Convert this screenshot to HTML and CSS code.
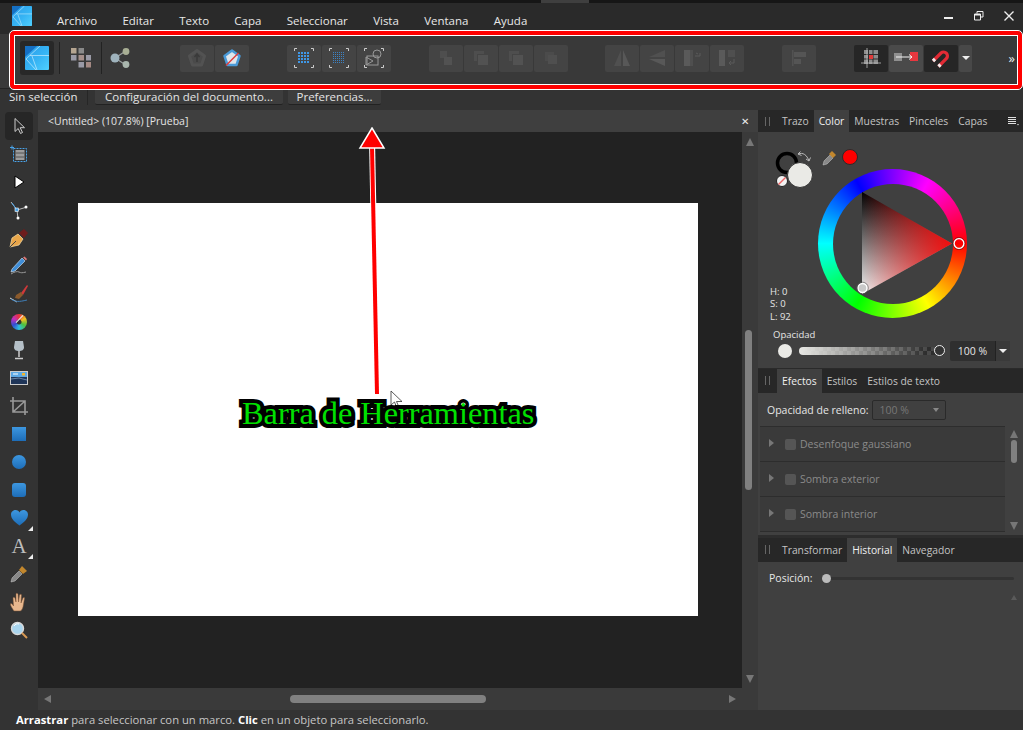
FILE: index.html
```html
<!DOCTYPE html>
<html lang="es">
<head>
<meta charset="utf-8">
<title>Affinity Designer</title>
<link rel="stylesheet" href="styles.css">
</head>
<body>
<svg class="defs" width="0" height="0">
  <defs>
    <linearGradient id="logoG" x1="0" y1="0" x2="1" y2="1"><stop offset="0" stop-color="#2a9be8"/><stop offset=".55" stop-color="#36b4f4"/><stop offset="1" stop-color="#4fd0ff"/></linearGradient>
    <linearGradient id="blueG" x1="0" y1="0" x2="0" y2="1"><stop offset="0" stop-color="#3d97e0"/><stop offset="1" stop-color="#1d6db8"/></linearGradient>
    <linearGradient id="triV" x1="0" y1="0" x2="0" y2="1"><stop offset="0" stop-color="#000"/><stop offset="1" stop-color="#f4f4f4"/></linearGradient>
    <linearGradient id="triH" x1="0" y1="0" x2="1" y2="0"><stop offset="0" stop-color="#f00" stop-opacity="0"/><stop offset="1" stop-color="#f00"/></linearGradient>
    <symbol id="logo" viewBox="0 0 24 24">
      <rect width="24" height="24" rx="1" fill="url(#logoG)"/>
      <path d="M0 0H12L0 11Z" fill="#1570c4"/>
      <path d="M15 0L1 13 11 24M5 9.500H24M7 10L12 24" stroke="#d5f2ff" stroke-width=".9" fill="none" opacity=".7"/>
    </symbol>
  </defs>
</svg>

<div class="app">
  <div class="topstrip"><span class="strip-tab"></span></div>

  <header class="titlebar">
    <svg class="title-logo"><use href="#logo"/></svg>
    <nav class="menu">
      <span>Archivo</span><span>Editar</span><span>Texto</span><span>Capa</span><span>Seleccionar</span><span>Vista</span><span>Ventana</span><span>Ayuda</span>
    </nav>
    <div class="winctl">
      <svg width="10" height="10" viewBox="0 0 10 10"><rect x="0" y="6" width="9" height="2" fill="#eee"/></svg>
      <svg width="10" height="10" viewBox="0 0 10 10"><path d="M3 2.500V.5H9V6H7M.5 3H6.500V9H.5Z" fill="none" stroke="#eee"/><rect x="1" y="3" width="5" height="1.500" fill="#eee"/></svg>
      <svg width="10" height="10" viewBox="0 0 10 10"><path d="M.5.5L9.500 9.500M9.500.5L.5 9.500" stroke="#eee" stroke-width="1.400"/></svg>
    </div>
  </header>

  <div class="toolbar">
    <div class="persona"><svg width="24" height="24"><use href="#logo"/></svg></div>
    <i class="vsep"></i>
    <svg class="plain studio" width="20" height="20" viewBox="0 0 20 20">
      <rect x="0" y="0" width="5.500" height="5.500" fill="#b5a591"/><rect x="7.500" y="0" width="5.500" height="5.500" fill="#8a8a8a"/>
      <rect x="0" y="7" width="5.500" height="5.500" fill="#9a9aa6"/><rect x="7.500" y="7" width="5.500" height="5.500" fill="#a58f8a"/><rect x="15" y="7" width="5" height="5.500" fill="#9a9aa6"/>
      <rect x="7.500" y="14" width="5.500" height="5.500" fill="#9a9aa6"/><rect x="15" y="14" width="5" height="5.500" fill="#a58a84"/>
    </svg>
    <i class="vsep"></i>
    <svg class="plain share" width="20" height="20" viewBox="0 0 20 20">
      <path d="M5 10L15 3.500M5 10L15 16.500" stroke="#9a9f9f" stroke-width="1.400"/>
      <circle cx="5" cy="10" r="4.500" fill="#9fb3bd"/><circle cx="16" cy="3.500" r="3.400" fill="#a8ae94"/><circle cx="16" cy="16.500" r="3.400" fill="#a9b6ad"/>
    </svg>

    <div class="group g1">
      <button class="tb"><svg width="22" height="22" viewBox="0 0 22 22"><path d="M11 3.500L18.500 9 15.500 18H6.500L3.500 9Z" fill="#4a4a4a" stroke="#525252" stroke-width="3" stroke-linejoin="round"/><path d="M11 7v8M8.500 10L11 7l2.500 3" stroke="#3a3a3a" stroke-width="1.500" fill="none"/></svg></button>
      <button class="tb"><svg width="22" height="22" viewBox="0 0 22 22"><path d="M11 3.500L18.500 9 15.500 18H6.500L3.500 9Z" fill="#dfe6ec" stroke="#4a9ad8" stroke-width="2.400" stroke-linejoin="round"/><path d="M5 18.500L17.500 6" stroke="#e03a3a" stroke-width="1.500"/></svg></button>
    </div>

    <div class="group g2">
      <button class="tb"><svg width="20" height="20" viewBox="0 0 20 20"><path class="crn" d="M.5 3V.5H3M17 .5h2.500V3M19.500 17v2.500H17M3 19.500H.5V17"/><path d="M4 5h12M4 8h12M4 11h12M4 14h12" stroke="#3f97e6" stroke-width="2" stroke-dasharray="2 1"/></svg></button>
      <button class="tb"><svg width="20" height="20" viewBox="0 0 20 20"><path class="crn" d="M.5 3V.5H3M17 .5h2.500V3M19.500 17v2.500H17M3 19.500H.5V17"/><path d="M4 4.500h12M4 6.500h12M4 8.500h12M4 10.500h12M4 12.500h12M4 14.500h12" stroke="#3c82c4" stroke-dasharray="1 1"/></svg></button>
      <button class="tb"><svg width="20" height="20" viewBox="0 0 20 20"><path class="crn" d="M.5 3V.5H3M17 .5h2.500V3M19.500 17v2.500H17M3 19.500H.5V17"/><rect x="3" y="8" width="11" height="9" fill="none" stroke="#999"/><circle cx="13" cy="6" r="4" fill="none" stroke="#999"/><path d="M2 9l7 4-7 4z" fill="none" stroke="#999"/></svg></button>
    </div>

    <div class="group g3">
      <button class="tb"><svg width="20" height="20" viewBox="0 0 20 20"><rect x="4" y="3" width="7" height="7" fill="#4e4e4e"/><rect x="8" y="9" width="8" height="8" fill="#525252"/></svg></button>
      <button class="tb"><svg width="20" height="20" viewBox="0 0 20 20"><path d="M3 3h10v3H6v7H3z" fill="#4e4e4e"/><rect x="7" y="7" width="10" height="10" fill="#525252"/></svg></button>
      <button class="tb"><svg width="20" height="20" viewBox="0 0 20 20"><path d="M3 3h10v3H6v7H3z" fill="#4e4e4e"/><rect x="7" y="7" width="10" height="10" fill="#525252"/></svg></button>
      <button class="tb"><svg width="20" height="20" viewBox="0 0 20 20"><path d="M4 4h9v3H7v6H4z" fill="#4b4b4b"/><rect x="7" y="7" width="9" height="9" fill="#4f4f4f"/></svg></button>
    </div>

    <div class="group g4">
      <button class="tb"><svg width="22" height="22" viewBox="0 0 22 22"><path d="M10 3v16H3z" fill="#505050"/><path d="M12 3v16h7z" fill="#585858"/></svg></button>
      <button class="tb"><svg width="22" height="22" viewBox="0 0 22 22"><path d="M19 3v7H3z" fill="#505050"/><path d="M19 19v-7H3z" fill="#585858"/></svg></button>
      <button class="tb"><svg width="22" height="22" viewBox="0 0 22 22"><rect x="3" y="3" width="6" height="16" fill="#5a5a5a"/><rect x="9" y="3" width="3" height="16" fill="#4f4f4f"/><path d="M14 9h5v-3M17 7l-2-1" stroke="#5a5a5a" fill="none"/></svg></button>
      <button class="tb"><svg width="22" height="22" viewBox="0 0 22 22"><rect x="3" y="3" width="6" height="16" fill="#5a5a5a"/><rect x="12" y="3" width="7" height="7" fill="#4f4f4f"/><path d="M18 12v4h-5M15 14l-2 2 2 2" stroke="#5a5a5a" fill="none"/></svg></button>
    </div>

    <div class="group g5">
      <button class="tb"><svg width="22" height="22" viewBox="0 0 22 22"><rect x="4" y="3" width="1.500" height="16" fill="#525252"/><rect x="6" y="5" width="12" height="5" fill="#555"/><rect x="6" y="12" width="7" height="5" fill="#555"/></svg></button>
    </div>

    <div class="group g6">
      <button class="tb dark"><svg width="20" height="20" viewBox="0 0 20 20"><rect x="3" y="2" width="14" height="14" fill="#8c8c8c"/><path d="M3 6.500h14M3 11h14M7.500 2v14M12 2v14" stroke="#2b2b2b"/><rect x="8" y="7" width="4" height="4" fill="#e03a3a"/><path d="M0 15h20M6 0v20" stroke="#bbb" stroke-width=".8"/></svg></button>
      <button class="tb lit"><svg width="24" height="14" viewBox="0 0 24 14"><rect x="0" y="2" width="8" height="8" fill="#8f8f8f"/><rect x="16" y="1" width="8" height="9" fill="#e8373f"/><path d="M2 6h16M15 3.500L18 6l-3 2.500" stroke="#f2f2f2" fill="none"/></svg></button>
      <button class="tb dark"><svg width="20" height="20" viewBox="0 0 20 20"><path d="M2 13L10 5A3.900 3.900 0 0 1 15.500 10.500L7.500 18.500" fill="none" stroke="#e22b35" stroke-width="3.200"/><path d="M2 13L4 11M7.500 18.500L9.500 16.500" stroke="#eee" stroke-width="3.200"/></svg></button>
      <button class="tb drop"><i class="caret"></i></button>
    </div>

    <span class="more">»</span>
  </div>

  <div class="contextbar">
    <span class="ctx-label">Sin selección</span>
    <i class="ctx-sep"></i>
    <button class="ctx-btn w1">Configuración del documento...</button>
    <button class="ctx-btn w2">Preferencias...</button>
  </div>

  <main class="workspace">
    <aside class="tools">
      <div class="tool sel"><svg width="18" height="18" viewBox="0 0 18 18"><path d="M5 1.500v13l3.200-3 2.300 5 2-1-2.300-4.800h4.300z" fill="#2b2b2b" stroke="#ccc"/></svg></div>
      <div class="tool"><svg width="18" height="18" viewBox="0 0 18 18"><path d="M0 2.500h4M2 .5v4" stroke="#4aa3e8"/><rect x="3.500" y="3.500" width="13" height="13" fill="none" stroke="#4aa3e8" stroke-dasharray="2 1"/><rect x="5.500" y="5" width="9" height="10" fill="#9d9d9d"/><path d="M5.500 8h9M5.500 12h9" stroke="#555"/></svg></div>
      <div class="tool"><svg width="12" height="14" viewBox="0 0 12 14"><path d="M2 1v12l9-6z" fill="#fff" stroke="#000"/></svg></div>
      <div class="tool"><svg width="20" height="20" viewBox="0 0 20 20"><path d="M2 2l6 8 10-3M8 10l1 9" fill="none" stroke="#bbb"/><path d="M8 10L3 3" stroke="#4aa3e8"/><rect x="6" y="8" width="3.500" height="3.500" fill="#4aa3e8" stroke="#fff" stroke-width=".6"/><circle cx="17" cy="7" r="1.500" fill="#fff"/><circle cx="9" cy="18" r="1.500" fill="#fff"/></svg></div>
      <div class="tool"><svg width="20" height="20" viewBox="0 0 20 20"><path d="M1 19l2-9 6-4 5 5-4 6z" fill="#e9a64a" stroke="#fbe0a8" stroke-width=".7"/><path d="M1 19l6-6" stroke="#444"/><path d="M10 5l5-4 4 4-4 5z" fill="#6d1d1d"/></svg></div>
      <div class="tool"><svg width="20" height="20" viewBox="0 0 20 20"><path d="M3 13L13 2l3 3L6 15l-4 1z" fill="#3f8ed8" stroke="#d8e8f5" stroke-width=".6"/><path d="M14 1.500l3 3 1-1.500-2.500-2.500z" fill="#e07a7a"/><path d="M2 18c3-2 6-3 8-2s3 1 7 0" fill="none" stroke="#999"/></svg></div>
      <div class="tool"><svg width="20" height="20" viewBox="0 0 20 20"><path d="M12 9L18 1l1 1-5 9z" fill="#d0393a"/><path d="M7 11l5-3 2 3-4 4-4-1z" fill="#8a5a2c"/><path d="M1 14l7 4" stroke="#ddd"/><path d="M2 15c4 3 8 3 16 1" fill="none" stroke="#3f7fb8"/></svg></div>
      <div class="tool"><span class="wheel-ico"></span></div>
      <div class="tool"><svg width="14" height="20" viewBox="0 0 14 20"><path d="M3 1h8l1 6c0 3-2 4-5 4S2 10 2 7z" fill="#b5c0c8"/><path d="M7 11v6M3 18.500h8" stroke="#ccc" stroke-width="1.500"/></svg></div>
      <div class="tool"><svg width="18" height="14" viewBox="0 0 18 14"><rect x=".5" y=".5" width="17" height="13" fill="#1f3558" stroke="#ccc"/><rect x="1" y="1" width="16" height="5" fill="#5ea9e4"/><rect x="12" y="2" width="3" height="2.500" fill="#f3b52c"/><path d="M3 3h5" stroke="#fff"/><path d="M1 8l8-1 8 2" stroke="#6a88a8" fill="none"/></svg></div>
      <div class="tool"><svg width="18" height="18" viewBox="0 0 18 18"><path d="M3 0v15h15M0 4h15v14M3 15L15 4" fill="none" stroke="#999" stroke-width="1.600"/></svg></div>
      <div class="tool"><span class="shape sq"></span></div>
      <div class="tool"><span class="shape ci"></span></div>
      <div class="tool"><span class="shape rr"></span></div>
      <div class="tool tri"><svg width="17" height="16" viewBox="0 0 17 16"><path d="M8.500 15.500C4 12 0 9 0 4.500 0 1.500 2.500 0 4.500 0c2 0 3.500 1 4 2.500C9 1 10.500 0 12.500 0 14.500 0 17 1.500 17 4.500 17 9 13 12 8.500 15.500z" fill="url(#blueG)"/></svg></div>
      <div class="tool tri"><span class="big-a">A</span></div>
      <div class="tool"><svg width="18" height="18" viewBox="0 0 18 18"><path d="M1 17l1-4 7-7 3 3-7 7z" fill="#888" stroke="#ccc" stroke-width=".5"/><path d="M9 5l3-4 5 5-4 3z" fill="#c2872d"/></svg></div>
      <div class="tool"><svg width="20" height="20" viewBox="0 0 18 20"><path d="M4 19c-2-3-4-6-3.500-7s2 0 3 2L3 6c0-1 1.500-1 2 0l1 4 0-8c0-1 1.500-1 2 0l.5 8 1-7c.5-1 2-1 2 0l-.5 8 2-5c.5-1 2-.5 1.500.5L13 15c-1 3-2 4-3 4z" fill="#e8b78e" stroke="#7a5032" stroke-width=".5"/></svg></div>
      <div class="tool"><svg width="18" height="18" viewBox="0 0 18 18"><circle cx="7.500" cy="7.500" r="6" fill="#a9d5ee" stroke="#d9d9d9" stroke-width="1.400"/><path d="M4 5c1-2 3-2.500 5-2" stroke="#fff" fill="none"/><path d="M12 12l5 5" stroke="#d89a54" stroke-width="2"/></svg></div>
    </aside>

    <section class="document">
      <div class="doc-tab"><span>&lt;Untitled&gt; (107.8%) [Prueba]</span><b class="doc-x">✕</b></div>
      <div class="doc-body">
        <div class="canvas"><div class="page"></div></div>
        <div class="vbar"><i class="ar up"></i><i class="vthumb"></i><i class="ar down"></i></div>
      </div>
      <div class="hbar"><i class="ar left"></i><i class="hthumb"></i><i class="ar right"></i></div>
    </section>

    <aside class="panels">
      <div class="tabs">
        <i class="grip"></i><span>Trazo</span><span class="on">Color</span><span>Muestras</span><span>Pinceles</span><span>Capas</span>
        <svg class="panel-menu" width="11" height="9" viewBox="0 0 11 9"><path d="M0 .5h8M0 2.500h8M0 4.500h8M0 6.500h8" stroke="#ddd"/><path d="M9 7h2L10 8.500z" fill="#ddd"/></svg>
      </div>
      <div class="colorbody">
        <div class="color-main">
          <div class="color-left">
            <svg class="swatches" width="90" height="40" viewBox="0 0 90 40">
              <circle cx="16" cy="13" r="9.500" fill="none" stroke="#000" stroke-width="3.500"/>
              <circle cx="29" cy="25" r="12.500" fill="#eaeae6" stroke="#333"/>
              <circle cx="11" cy="31" r="5.500" fill="#f2f2f2" stroke="#222"/><path d="M7.500 34.500L14.500 27.500" stroke="#e66" stroke-width="1.500"/>
              <path d="M27 4c5-2 9 1 11 7M27 4l2.500-2.500M27 4l3.500 1.500M38 11l-3-2M38 11l1.500-3.500" fill="none" stroke="#bbb"/>
              <path d="M52 15l1-4 6-6 3 3-6 6z" fill="#888" stroke="#ccc" stroke-width=".5"/><path d="M58 4l3-3 4 4-3 3z" fill="#c2872d"/>
              <circle cx="79" cy="7" r="7.500" fill="#f00" stroke="#2b2b2b"/>
            </svg>
            <div class="hsl"><div>H: 0</div><div>S: 0</div><div>L: 92</div></div>
          </div>
          <div class="wheel">
            <svg class="wheel-over" width="149" height="149" viewBox="0 0 149 149">
              <path d="M44 23L134 74.500 44 125z" fill="url(#triV)"/>
              <path d="M44 23L134 74.500 44 125z" fill="url(#triH)" opacity=".9"/>
              <circle cx="141" cy="74.500" r="5" fill="none" stroke="#fff" stroke-width="1.600"/>
              <circle cx="141" cy="74.500" r="6" fill="none" stroke="#300" stroke-width=".5"/>
              <circle cx="44.500" cy="119" r="4.500" fill="#c9c9c9" stroke="#fff" stroke-width="1.400"/>
              <circle cx="44.500" cy="119" r="5.800" fill="none" stroke="#555" stroke-width=".6"/>
            </svg>
          </div>
        </div>
        <div class="op-label">Opacidad</div>
        <div class="op-row">
          <i class="op-swatch"></i>
          <div class="op-slider"><i class="op-thumb"></i></div>
          <div class="op-box"><span>100 %</span><i class="op-drop"><i class="caret"></i></i></div>
        </div>
      </div>

      <div class="tabs t2">
        <i class="grip"></i><span class="on">Efectos</span><span>Estilos</span><span>Estilos de texto</span>
      </div>
      <div class="fxbody">
        <div class="fill-row"><span>Opacidad de relleno:</span><div class="fill-box"><span>100 %</span><i class="caret dim"></i></div></div>
        <div class="fx-wrap">
          <div class="fx-list">
            <div class="fx"><i class="tw"></i><i class="chk"></i><span>Desenfoque gaussiano</span></div>
            <div class="fx"><i class="tw"></i><i class="chk"></i><span>Sombra exterior</span></div>
            <div class="fx"><i class="tw"></i><i class="chk"></i><span>Sombra interior</span></div>
          </div>
          <div class="fx-scroll"><i class="ar up"></i><i class="fx-thumb"></i><i class="ar down"></i></div>
        </div>
      </div>

      <div class="tabs t3">
        <i class="grip"></i><span>Transformar</span><span class="on">Historial</span><span>Navegador</span>
      </div>
      <div class="histbody">
        <span>Posición:</span>
        <div class="hist-slider"><i class="hist-thumb"></i></div>
        <i class="hist-up"></i>
      </div>
    </aside>
  </main>

  <footer class="status"><b>Arrastrar</b> para seleccionar con un marco. <b>Clic</b> en un objeto para seleccionarlo.</footer>

  <div class="frame"></div>
  <svg class="arrow" width="40" height="285" viewBox="0 0 40 285">
    <path d="M20 12L25 268" stroke="#fff" stroke-width="6"/>
    <path d="M20 20L25 267" stroke="#f00" stroke-width="4"/>
    <path d="M20 1L32 21H8z" fill="#f00" stroke="#fff" stroke-width="1.500"/>
  </svg>
  <svg class="cursor" width="14" height="20" viewBox="0 0 14 20"><path d="M1 1v14l3.500-3 2 5 2-1-2-4.500H12z" fill="#fff" stroke="#333" stroke-width=".8"/></svg>
  <div class="label">Barra de Herramientas</div>
</div>
</body>
</html>
```

FILE: styles.css
```css
* { box-sizing: border-box; }
html, body { margin: 0; padding: 0; background: #2b2b2b; }
body { font-family: "Open Sans", "Noto Sans", sans-serif; font-size: 11px; color: #e6e6e6; overflow: hidden; }
button { font: inherit; color: inherit; border: 0; padding: 0; margin: 0; }
i { display: block; font-style: normal; }
.defs { position: absolute; }

.app { position: relative; width: 1023px; height: 730px; display: flex; flex-direction: column; overflow: hidden; background: #2b2b2b; }

.topstrip { height: 3px; background: #161616; padding-left: 541px; flex: none; }
.strip-tab { display: block; width: 48px; height: 3px; background: #3f3f3f; }

.titlebar { height: 31px; flex: none; display: flex; align-items: center; background: #2a2a2a; padding-left: 12px; }
.title-logo { width: 20px; height: 20px; flex: none; margin-top: -5px; }
.menu { display: flex; gap: 25.3px; margin-left: 25px; font-size: 11.5px; color: #e8e8e8; padding-top: 3px; }
.winctl { margin-left: auto; display: flex; gap: 20px; padding-right: 9px; margin-top: -5px; }

.toolbar { height: 55px; flex: none; display: flex; align-items: center; background: #393939; padding: 0 0 6px 20px; border-bottom: 1px solid #242424; }
.persona { width: 34px; height: 34px; background: #282828; border-radius: 3px; display: flex; align-items: center; justify-content: center; }
.vsep { width: 1px; height: 32px; background: #222; margin-left: 5px; }
.plain { flex: none; }
.studio { margin-left: 11px; margin-right: 5px; }
.share { margin-left: 8px; }
.group { display: flex; gap: 1px; }
.g1 { margin-left: 50px; }
.g2 { margin-left: 38px; }
.g3 { margin-left: 38px; }
.g4 { margin-left: 37px; }
.g5 { margin-left: 38px; }
.g6 { margin-left: 38px; }
.tb { width: 34px; height: 27px; background: #444; border-radius: 2px; display: flex; align-items: center; justify-content: center; }
.tb.dark { background: #262626; }
.tb.lit { background: #4a4a4a; }
.tb.drop { width: 13px; background: #484848; }
.crn { fill: none; stroke: #ccc; }
.caret { width: 0; height: 0; border-left: 4px solid transparent; border-right: 4px solid transparent; border-top: 4px solid #eee; }
.caret.dim { border-top-color: #888; border-left-width: 3.500px; border-right-width: 3.500px; }
.more { margin-left: auto; margin-right: 8px; color: #eee; font-size: 13px; line-height: 1; }

.contextbar { height: 21px; flex: none; display: flex; align-items: flex-start; background: #333; }
.ctx-label { padding: 0 0 0 9px; width: 87px; line-height: 15px; font-size: 11.5px; }
.ctx-sep { width: 1px; height: 16px; background: #262626; }
.ctx-btn { height: 16px; line-height: 15px; background: #3d3d3d; border-bottom: 1px solid #222; border-radius: 0 0 2px 2px; font-size: 11.5px; color: #e4e4e4; }
.w1 { width: 188px; margin-left: 7px; }
.w2 { width: 93px; margin-left: 5px; }

.workspace { height: 600px; flex: none; display: flex; background: #333; }
.tools { width: 38px; flex: none; background: #333; padding-top: 2px; display: flex; flex-direction: column; align-items: center; }
.tool { width: 28px; height: 28px; flex: none; display: flex; align-items: center; justify-content: center; position: relative; }
.tool.sel { background: #262626; border-radius: 4px; }
.tool.tri::after { content: ""; position: absolute; right: 0; bottom: 1px; border-left: 5px solid transparent; border-bottom: 5px solid #eee; }
.wheel-ico { width: 16px; height: 16px; border-radius: 50%; background: radial-gradient(#333 0 2px, transparent 3px), conic-gradient(#e8333a, #f0c020, #4cc040, #30c0e0, #3050d0, #c030c0, #e8333a); position: relative; }
.wheel-ico::after { content: ""; position: absolute; left: 8px; top: 0; width: 1px; height: 10px; background: #eee; transform: rotate(45deg); }
.shape { width: 14px; height: 14px; background: linear-gradient(#3d97e0, #1d6db8); display: block; }
.shape.ci { border-radius: 50%; }
.shape.rr { border-radius: 3px; }
.big-a { font-family: "Liberation Serif", serif; font-size: 21px; color: #bdbdbd; line-height: 1; }

.document { width: 720px; flex: none; display: flex; flex-direction: column; }
.doc-tab { height: 22px; flex: none; display: flex; align-items: center; justify-content: space-between; background: #3f3f3f; padding: 0 9px 0 10px; font-size: 10.5px; color: #e4e4e4; }
.doc-x { font-weight: 400; font-size: 10px; color: #eee; }
.doc-body { display: flex; height: 556px; flex: none; }
.canvas { width: 704px; flex: none; background: #222; padding: 71px 0 0 40px; }
.page { width: 620px; height: 413px; background: #fff; }
.vbar { width: 16px; flex: none; background: #3a3a3a; position: relative; display: flex; flex-direction: column; align-items: center; }
.vthumb { position: absolute; top: 198px; left: 3px; width: 7px; height: 160px; background: #808080; border-radius: 4px; }
.vbar .up { margin-top: 6px; }
.vbar .down { margin-top: auto; margin-bottom: 5px; }
.ar { width: 0; height: 0; }
.ar.up { border-left: 4px solid transparent; border-right: 4px solid transparent; border-bottom: 8px solid #777; }
.ar.down { border-left: 4px solid transparent; border-right: 4px solid transparent; border-top: 8px solid #777; }
.ar.left { border-top: 4px solid transparent; border-bottom: 4px solid transparent; border-right: 7px solid #777; }
.ar.right { border-top: 4px solid transparent; border-bottom: 4px solid transparent; border-left: 7px solid #777; }
.hbar { height: 22px; flex: none; display: flex; align-items: center; background: #3a3a3a; padding: 0 22px 0 6px; }
.hthumb { width: 196px; height: 8px; background: #808080; border-radius: 4px; margin-left: 239px; }
.hbar .right { margin-left: auto; }

.panels { width: 265px; flex: none; display: flex; flex-direction: column; background: #404040; }
.tabs { height: 22px; flex: none; display: flex; align-items: stretch; background: #272727; padding-left: 4px; position: relative; font-size: 10.3px; color: #c4c4c4; }
.tabs span { padding: 0 5px; line-height: 22px; }
.tabs .on { background: #404040; color: #f0f0f0; }
.grip { width: 5px; height: 9px; margin: 7px 7px 0 3px; border-left: 1px solid #666; border-right: 1px solid #666; flex: none; }
.panel-menu { position: absolute; right: 4px; top: 7px; }

.colorbody { height: 237px; flex: none; padding: 18px 0 0 12px; border-bottom: 1px solid #2a2a2a; }
.color-main { display: flex; height: 173px; }
.color-left { width: 48px; flex: none; display: flex; flex-direction: column; justify-content: space-between; }
.swatches { display: block; margin-left: 1px; overflow: visible; }
.hsl { font-size: 9.500px; line-height: 12.500px; color: #e6e6e6; }
.wheel { width: 149px; height: 149px; margin-top: 19px; border-radius: 50%; flex: none; position: relative; background: conic-gradient(from 90deg, #f00, #ff0, #0f0, #0ff, #00f, #f0f, #f00); }
.wheel::before { content: ""; position: absolute; left: 14.500px; top: 14.500px; width: 120px; height: 120px; border-radius: 50%; background: #404040; }
.wheel-over { position: absolute; left: 0; top: 0; }
.op-label { font-size: 9.500px; line-height: 13px; margin: 5px 0 0 3px; color: #e6e6e6; }
.op-row { display: flex; align-items: center; height: 22px; margin-top: -1px; }
.op-swatch { width: 14px; height: 14px; border-radius: 50%; background: #eaeae6; margin-left: 8px; }
.op-slider { width: 141px; height: 8px; margin-left: 7px; border-radius: 4px; position: relative; background: linear-gradient(90deg, #e8e8e4, rgba(232,232,228,0) 90%), repeating-conic-gradient(#4a4a4a 0 25%, #2e2e2e 0 50%) 0 0 / 8px 8px; }
.op-thumb { position: absolute; right: -5px; top: -2px; width: 11px; height: 11px; border-radius: 50%; border: 1.500px solid #eee; background: #333; }
.op-box { margin-left: 10px; width: 60px; height: 20px; background: #2f2f2f; border-radius: 2px; display: flex; align-items: center; font-size: 10.5px; }
.op-box span { width: 45px; text-align: center; }
.op-drop { width: 15px; height: 20px; display: flex; align-items: center; justify-content: center; background: #3a3a3a; border-left: 1px solid #222; }

.t2 { height: 24px; }
.t2 span, .t3 span { line-height: 24px; }
.fxbody { height: 145px; flex: none; border-bottom: 3px solid #2d2d2d; overflow: hidden; }
.fill-row { height: 33px; display: flex; align-items: center; padding-left: 9px; color: #e6e6e6; font-size: 10.5px; gap: 4px; }
.fill-box { width: 74px; height: 20px; background: #404040; border: 1px solid #2a2a2a; border-radius: 2px; display: flex; align-items: center; justify-content: space-between; padding: 0 6px; color: #777; }
.fx-wrap { display: flex; }
.fx-list { width: 245px; margin-left: 2px; border-top: 1px solid #2d2d2d; background: #3a3a3a; flex: none; }
.fx { height: 35px; border-bottom: 1px solid #2d2d2d; display: flex; align-items: center; padding-left: 9px; color: #8a8a8a; font-size: 10.5px; }
.tw { border-top: 4px solid transparent; border-bottom: 4px solid transparent; border-left: 5px solid #777; margin-top: -3px; }
.chk { width: 11px; height: 11px; background: #555; border-radius: 2px; margin-left: 11px; margin-right: 4px; }
.fx-scroll { flex: 1; position: relative; display: flex; flex-direction: column; align-items: center; padding-top: 4px; height: 105px; }
.fx-thumb { width: 6px; height: 23px; background: #808080; border-radius: 3px; margin-top: 2px; }
.fx-scroll .down { margin-top: auto; margin-bottom: 1px; }

.t3 { height: 24px; }
.histbody { flex: 1; display: flex; align-items: flex-start; padding: 9px 0 0 11px; font-size: 10.5px; position: relative; }
.hist-slider { width: 192px; height: 3px; background: #333; margin: 6px 0 0 10px; border-radius: 2px; position: relative; flex: none; }
.hist-thumb { position: absolute; left: 0; top: -3px; width: 9px; height: 9px; background: #bbb; border-radius: 50%; }
.hist-up { position: absolute; right: 6px; top: 33px; border-left: 3px solid transparent; border-right: 3px solid transparent; border-bottom: 5px solid #5a5a5a; }

.status { height: 20px; flex: none; background: #333; padding-left: 16px; line-height: 20px; font-size: 11.25px; color: #c6c6c6; white-space: pre-wrap; }
.status b { color: #fff; font-weight: 700; }

.frame { position: absolute; left: 10px; top: 31px; width: 1012px; height: 58px; border: 4px solid #f00; border-radius: 4px; outline: 1px solid #fff; box-shadow: inset 0 0 0 1px #fff; pointer-events: none; }
.arrow { position: absolute; left: 352px; top: 127px; }
.cursor { position: absolute; left: 390px; top: 390px; }
.label { position: absolute; left: 242px; top: 395px; font-family: "Liberation Serif", serif; font-size: 32.3px; line-height: 36px; color: #00e000; white-space: nowrap; -webkit-text-stroke: 8px #000; paint-order: stroke fill; }
```
